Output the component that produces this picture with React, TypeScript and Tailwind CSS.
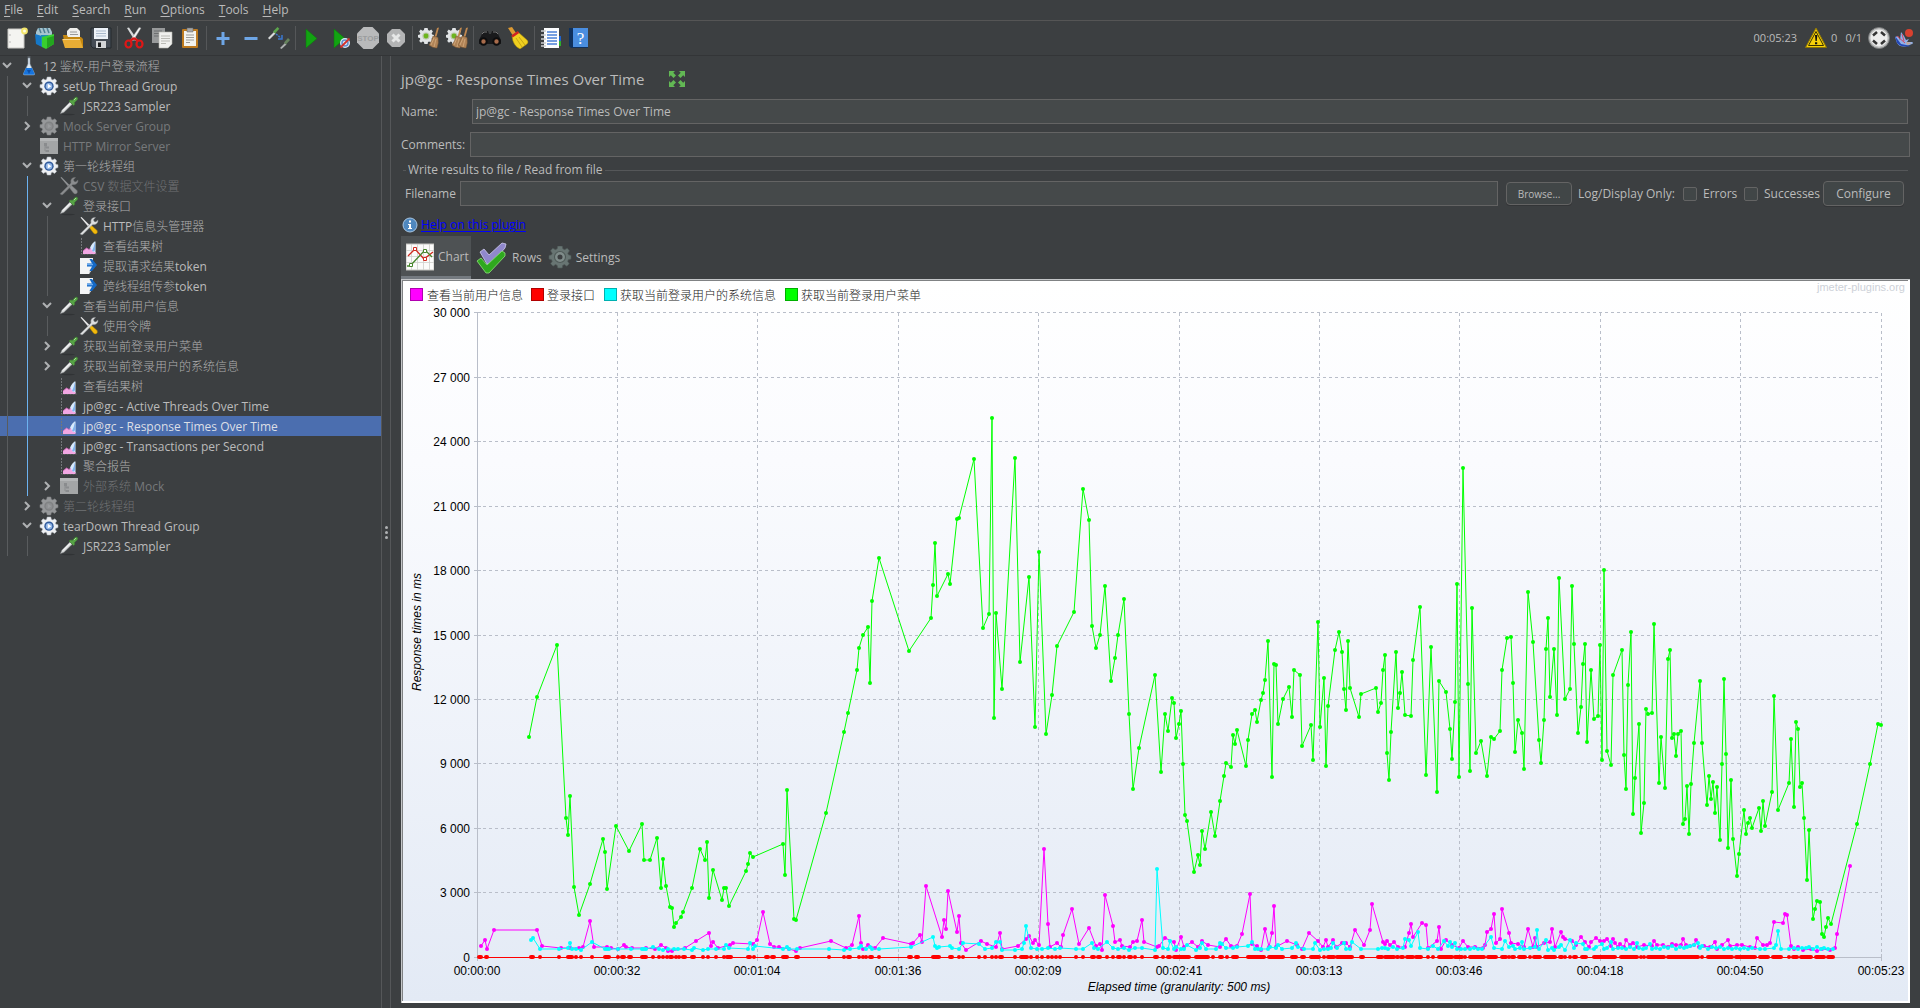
import type { ReactNode } from "react"

type TreeRow = {
  level: number
  icon: "flask" | "gear" | "dropper" | "page" | "tools" | "graph" | "script"
  label: string
  open?: boolean
  closed?: boolean
  off?: boolean
  selected?: boolean
  accent?: boolean
}

const tree: TreeRow[] = [
  { level: 0, icon: "flask", label: "12 鉴权-用户登录流程", open: true },
  { level: 1, icon: "gear", label: "setUp Thread Group", open: true },
  { level: 2, icon: "dropper", label: "JSR223 Sampler" },
  { level: 1, icon: "gear", label: "Mock Server Group", closed: true, off: true },
  { level: 1, icon: "page", label: "HTTP Mirror Server", off: true },
  { level: 1, icon: "gear", label: "第一轮线程组", open: true },
  { level: 2, icon: "tools", label: "CSV 数据文件设置", off: true, accent: true },
  { level: 2, icon: "dropper", label: "登录接口", open: true, accent: true },
  { level: 3, icon: "tools", label: "HTTP信息头管理器", accent: true },
  { level: 3, icon: "graph", label: "查看结果树", accent: true },
  { level: 3, icon: "script", label: "提取请求结果token", accent: true },
  { level: 3, icon: "script", label: "跨线程组传参token", accent: true },
  { level: 2, icon: "dropper", label: "查看当前用户信息", open: true, accent: true },
  { level: 3, icon: "tools", label: "使用令牌", accent: true },
  { level: 2, icon: "dropper", label: "获取当前登录用户菜单", closed: true, accent: true },
  { level: 2, icon: "dropper", label: "获取当前登录用户的系统信息", closed: true, accent: true },
  { level: 2, icon: "graph", label: "查看结果树", accent: true },
  { level: 2, icon: "graph", label: "jp@gc - Active Threads Over Time", accent: true },
  { level: 2, icon: "graph", label: "jp@gc - Response Times Over Time", selected: true, accent: true },
  { level: 2, icon: "graph", label: "jp@gc - Transactions per Second", accent: true },
  { level: 2, icon: "graph", label: "聚合报告", accent: true },
  { level: 2, icon: "page", label: "外部系统 Mock", closed: true, off: true, accent: true },
  { level: 1, icon: "gear", label: "第二轮线程组", closed: true, off: true },
  { level: 1, icon: "gear", label: "tearDown Thread Group", open: true },
  { level: 2, icon: "dropper", label: "JSR223 Sampler" },
]

// x,y pairs in chart units
const green =
  "529,737 537,697 557,645 566,818 568,835 570,796 574,887 579,915 590,884 603,839 605,852 607,889 616,826 629,851 642,824 644,860 650,860 657,838 661,888 663,859 666,886 670,907 672,908 674,927 676,923 681,917 683,912 692,888 700,849 705,860 707,842 709,898 713,870 722,900 724,888 726,888 729,906 746,871 748,864 750,853 753,857 783,844 785,875 787,790 794,919 796,920 826,813 844,732 848,713 857,670 859,648 863,635 868,627 870,683 872,601 879,558 909,651 931,618 933,585 935,543 937,596 948,574 950,584 957,519 959,518 974,459 983,628 989,614 992,418 994,718 996,613 1002,689 1015,458 1020,662 1029,577 1035,727 1039,552 1046,734 1052,695 1057,646 1074,612 1083,489 1089,520 1092,626 1096,648 1100,635 1105,586 1111,681 1115,658 1118,635 1124,599 1129,714 1133,789 1139,748 1155,675 1161,772 1165,714 1168,731 1172,698 1174,703 1176,738 1179,724 1181,711 1183,764 1185,815 1187,821 1194,872 1198,855 1200,865 1202,831 1205,849 1211,812 1215,836 1220,801 1224,776 1226,763 1231,767 1233,735 1235,744 1237,730 1246,766 1248,740 1252,714 1255,710 1257,722 1261,700 1263,693 1265,680 1268,641 1272,777 1274,664 1276,665 1278,724 1283,699 1289,687 1292,717 1294,670 1300,675 1302,746 1311,725 1313,760 1318,622 1320,727 1324,678 1326,766 1328,706 1335,650 1339,632 1342,652 1344,689 1346,710 1348,641 1350,688 1359,717 1361,694 1376,688 1378,712 1381,703 1383,670 1385,655 1387,753 1389,780 1391,732 1396,652 1398,708 1400,693 1402,672 1405,715 1411,716 1413,660 1420,607 1426,775 1431,647 1437,792 1439,681 1446,692 1450,729 1452,759 1455,702 1457,584 1459,777 1463,468 1468,684 1470,771 1472,608 1476,753 1481,741 1487,776 1491,737 1494,739 1500,731 1502,670 1507,638 1511,637 1513,683 1515,752 1518,720 1522,733 1524,769 1528,592 1533,642 1539,740 1541,763 1544,720 1546,649 1548,618 1550,697 1554,649 1557,715 1559,578 1565,699 1570,689 1572,586 1574,644 1578,733 1581,707 1583,664 1585,644 1587,742 1591,670 1594,719 1598,716 1600,645 1602,760 1604,570 1607,751 1611,765 1613,675 1622,650 1624,755 1626,789 1628,685 1631,632 1633,814 1635,778 1639,724 1641,833 1644,803 1646,709 1648,714 1652,713 1654,624 1659,783 1661,737 1665,788 1668,659 1670,650 1672,738 1674,734 1676,756 1678,734 1681,731 1683,824 1685,819 1687,786 1689,834 1691,784 1694,743 1700,681 1702,743 1707,805 1709,776 1711,799 1713,782 1715,813 1717,787 1720,840 1722,764 1724,679 1726,754 1728,848 1731,780 1733,839 1737,876 1739,854 1744,810 1746,834 1748,823 1750,818 1752,828 1759,808 1761,831 1763,801 1765,826 1772,792 1774,696 1778,810 1789,783 1791,739 1794,807 1796,722 1798,729 1800,787 1802,783 1804,818 1807,880 1809,830 1813,919 1815,909 1817,901 1820,902 1822,934 1824,937 1826,927 1828,918 1831,924 1857,824 1870,764 1878,724 1881,725"

const magenta =
  "481,946 485,940 487,949 494,930 537,930 542,946 561,948 570,948 579,948 583,947 590,921 594,947 607,947 611,948 618,949 624,945 626,947 632,948 646,948 655,949 661,945 666,948 668,951 672,951 685,948 696,941 709,933 711,946 713,942 718,948 730,945 733,943 753,944 757,940 763,912 770,944 774,947 779,947 789,949 796,951 800,948 831,941 846,948 852,945 859,916 861,943 863,949 868,945 875,948 883,938 911,944 913,943 920,935 922,942 926,886 942,937 944,920 946,929 948,891 957,932 959,916 961,943 966,950 981,941 987,944 996,947 1000,933 1002,949 1018,946 1026,939 1029,936 1033,943 1035,940 1039,945 1044,849 1048,924 1050,947 1057,943 1061,947 1063,935 1072,909 1079,944 1089,928 1096,946 1100,944 1102,950 1105,895 1113,926 1115,942 1120,940 1122,946 1130,947 1133,942 1137,941 1142,920 1144,942 1157,947 1159,946 1165,938 1174,942 1176,950 1181,937 1184,947 1192,942 1198,947 1202,941 1208,945 1220,947 1226,939 1231,946 1237,946 1242,934 1250,894 1252,944 1257,946 1261,950 1265,929 1269,947 1272,933 1274,906 1276,947 1287,941 1297,945 1302,949 1309,933 1318,941 1323,947 1326,940 1328,947 1333,940 1336,947 1342,943 1346,943 1350,947 1355,930 1364,945 1370,930 1372,904 1383,942 1385,944 1387,941 1390,945 1394,942 1398,947 1405,947 1409,933 1411,924 1413,937 1422,923 1426,925 1428,948 1437,941 1439,927 1441,949 1446,940 1452,945 1459,948 1463,941 1468,947 1475,947 1483,948 1485,945 1487,932 1491,929 1494,914 1496,943 1500,939 1502,909 1509,933 1511,943 1518,944 1524,947 1528,929 1533,947 1535,938 1537,947 1544,943 1550,942 1552,929 1555,947 1561,932 1563,937 1565,939 1572,941 1576,945 1581,937 1585,942 1589,947 1591,942 1596,938 1600,941 1604,941 1607,939 1611,946 1613,939 1615,943 1618,947 1620,944 1624,947 1626,940 1630,945 1633,943 1637,947 1644,945 1652,946 1654,941 1657,945 1663,945 1668,947 1672,944 1676,945 1681,945 1683,939 1686,945 1690,946 1694,945 1696,940 1699,947 1704,946 1710,947 1715,942 1717,949 1722,945 1728,940 1730,946 1737,945 1742,945 1750,947 1755,948 1757,938 1763,945 1767,945 1770,943 1774,922 1783,923 1785,914 1787,915 1791,946 1794,949 1798,947 1803,950 1811,949 1817,951 1822,949 1830,950 1835,948 1837,934 1850,866"

const cyan =
  "531,940 533,938 540,949 559,949 568,948 570,943 572,949 576,949 581,950 592,942 605,949 607,949 609,949 618,949 631,949 642,949 644,949 646,949 653,947 659,949 663,950 668,949 674,949 678,949 684,949 692,950 694,948 703,950 708,949 716,949 724,949 726,945 729,948 748,949 750,943 753,949 755,946 783,949 787,947 789,949 797,949 829,949 844,950 850,949 859,948 861,946 866,949 870,947 872,949 879,949 911,947 933,937 935,946 937,948 939,947 950,946 952,948 959,949 963,943 979,944 985,949 992,948 996,942 1000,942 1002,950 1015,950 1022,949 1024,943 1026,926 1031,948 1037,949 1042,949 1048,948 1055,949 1060,948 1076,949 1083,949 1092,943 1094,948 1098,949 1107,942 1113,948 1118,949 1124,948 1129,950 1135,948 1142,948 1155,950 1157,869 1163,948 1168,949 1170,941 1174,949 1176,947 1181,949 1184,949 1187,945 1196,950 1200,948 1202,943 1206,949 1216,949 1220,943 1222,944 1226,948 1233,948 1237,947 1248,946 1252,942 1255,949 1258,949 1261,949 1268,949 1270,947 1276,948 1278,945 1282,949 1292,948 1296,943 1298,947 1304,949 1313,949 1315,943 1320,950 1324,949 1328,949 1331,948 1333,943 1337,948 1344,943 1346,949 1350,949 1352,942 1361,949 1378,949 1382,948 1385,948 1388,949 1393,947 1397,949 1403,948 1405,939 1409,940 1411,946 1418,932 1420,948 1428,949 1433,946 1438,949 1444,941 1448,946 1450,942 1452,947 1455,943 1457,949 1461,949 1465,949 1470,949 1474,948 1478,949 1482,949 1491,937 1494,948 1502,949 1505,941 1509,947 1513,946 1515,949 1520,948 1522,942 1524,949 1530,948 1535,947 1537,930 1539,949 1546,940 1548,950 1552,948 1554,950 1559,947 1561,945 1565,950 1570,940 1574,948 1576,943 1583,944 1585,949 1587,949 1594,949 1596,947 1602,944 1604,949 1607,948 1611,942 1613,949 1618,948 1622,948 1626,949 1630,947 1634,949 1637,943 1639,948 1643,949 1646,948 1650,944 1652,949 1656,948 1660,949 1664,947 1668,948 1672,946 1676,949 1680,947 1684,948 1687,947 1690,946 1694,945 1698,943 1700,948 1702,946 1708,949 1712,947 1716,948 1720,947 1724,949 1728,948 1732,949 1736,948 1740,949 1744,948 1748,949 1752,948 1760,949 1765,949 1774,948 1776,945 1778,931 1781,949 1789,949 1794,948 1798,949 1802,948 1806,948 1809,947 1813,949 1817,947 1821,949 1824,948 1828,949 1833,949"

const redRuns = [
  [479, 481], [486, 487], [531, 533], [540, 540], [559, 559], [568, 572], [576, 576], [581, 581], [592, 592], [605, 609], [618, 618],
  [622, 624], [629, 631], [642, 646], [653, 653], [659, 659], [663, 663], [667, 667], [670, 672], [676, 676], [679, 679], [683, 685],
  [692, 694], [703, 703], [708, 708], [716, 716], [724, 724], [727, 731], [748, 750], [754, 754], [766, 768], [772, 774], [783, 787],
  [796, 798], [829, 829], [844, 844], [848, 850], [859, 859], [863, 863], [866, 866], [870, 872], [879, 879], [909, 911], [916, 918],
  [933, 939], [950, 952], [959, 959], [963, 963], [979, 979], [985, 985], [992, 992], [996, 996], [1000, 1002], [1015, 1015],
  [1021, 1027], [1031, 1031], [1037, 1037], [1042, 1042], [1048, 1048], [1052, 1052], [1056, 1056], [1060, 1060], [1076, 1076],
  [1083, 1083], [1092, 1094], [1098, 1100], [1107, 1107], [1113, 1113], [1118, 1120], [1124, 1124], [1129, 1131], [1135, 1135],
  [1142, 1142], [1155, 1157], [1163, 1163], [1168, 1170], [1174, 1189], [1196, 1208], [1213, 1213], [1220, 1222], [1227, 1227],
  [1233, 1237], [1248, 1264], [1269, 1283], [1292, 1296], [1302, 1304], [1311, 1319], [1324, 1324], [1328, 1334], [1337, 1352],
  [1361, 1363], [1378, 1382], [1385, 1394], [1397, 1398], [1401, 1403], [1407, 1413], [1416, 1421], [1428, 1428], [1433, 1433],
  [1439, 1452], [1455, 1462], [1465, 1465], [1470, 1484], [1488, 1496], [1502, 1506], [1509, 1509], [1512, 1514], [1519, 1525],
  [1530, 1530], [1534, 1540], [1545, 1555], [1560, 1562], [1565, 1565], [1570, 1570], [1574, 1576], [1582, 1586], [1594, 1615],
  [1621, 1637], [1641, 1641], [1644, 1644], [1648, 1664], [1668, 1698], [1702, 1702], [1708, 1732], [1736, 1755], [1760, 1768],
  [1773, 1781], [1789, 1789], [1793, 1797], [1801, 1811], [1816, 1824], [1828, 1833],
]

const yTicks = ["30 000", "27 000", "24 000", "21 000", "18 000", "15 000", "12 000", "9 000", "6 000", "3 000", "0"]
const yLines = [312, 377, 441, 506, 570, 635, 699, 763, 828, 892, 957]
const xTicks = ["00:00:00", "00:00:32", "00:01:04", "00:01:36", "00:02:09", "00:02:41", "00:03:13", "00:03:46", "00:04:18", "00:04:50", "00:05:23"]
const xLines = [477, 617, 757, 898, 1038, 1179, 1319, 1459, 1600, 1740, 1881]

function Series({ points, color }: { points: string; color: string }) {
  return (
    <g>
      <polyline points={points} fill="none" stroke={color} strokeWidth="1" />
      {points.split(" ").map((p, i) => {
        const [x, y] = p.split(",")
        return <circle key={i} cx={x} cy={y} r="2" fill={color} />
      })}
    </g>
  )
}

function Chart() {
  return (
    <svg viewBox="403 281 1505 720" className="block w-full h-auto font-['Liberation_Sans',Arial,sans-serif] text-[12px]">
      <defs>
        <linearGradient id="chartBg" x1="0" y1="0" x2="0" y2="1">
          <stop offset="0" stopColor="#ffffff" />
          <stop offset="0.25" stopColor="#fafbfe" />
          <stop offset="1" stopColor="#e3eaf5" />
        </linearGradient>
      </defs>
      <rect x="403" y="281" width="1505" height="720" fill="url(#chartBg)" />
      <g stroke="#b9bec9" fill="none">
        {yLines.slice(0, 10).map((y) => (
          <path key={y} d={`M477 ${y}.5H1881`} strokeDasharray="3 3" />
        ))}
        {xLines.slice(1).map((x) => (
          <path key={x} d={`M${x}.5 313V957`} strokeDasharray="3 3" />
        ))}
        {yLines.map((y) => (
          <path key={y} d={`M474 ${y}.5h7`} />
        ))}
        {xLines.map((x) => (
          <path key={x} d={`M${x}.5 954v7`} />
        ))}
        <path d="M477.5 313V957M477 957.5H1882" />
      </g>
      {yTicks.map((t, i) => (
        <text key={t} x="470" y={yLines[i] + 5} textAnchor="end">{t}</text>
      ))}
      {xTicks.map((t, i) => (
        <text key={t} x={xLines[i]} y="975" textAnchor="middle">{t}</text>
      ))}
      <text x="1179" y="991" textAnchor="middle" fontStyle="italic">Elapsed time (granularity: 500 ms)</text>
      <text transform="translate(421 632) rotate(-90)" textAnchor="middle" fontStyle="italic">Response times in ms</text>
      <Series points={magenta} color="#ff00ff" />
      <path d="M479 957.5H1833" stroke="#ff0000" />
      {redRuns.map(([a, b]) => (
        <rect key={a} x={a - 2} y="955" width={b - a + 4} height="4" rx="2" fill="#ff0000" />
      ))}
      <Series points={cyan} color="#00ffff" />
      <Series points={green} color="#00ff00" />
      <g className="font-['Noto_Sans_CJK_SC',sans-serif] font-light" fill="#222">
        <rect x="410.5" y="288.5" width="12" height="12" fill="#ff00ff" stroke="#b000b0" />
        <text x="427" y="300">查看当前用户信息</text>
        <rect x="531.5" y="288.5" width="12" height="12" fill="#ff0000" stroke="#b00000" />
        <text x="547" y="300">登录接口</text>
        <rect x="604.5" y="288.5" width="12" height="12" fill="#00ffff" stroke="#00b0b0" />
        <text x="620" y="300">获取当前登录用户的系统信息</text>
        <rect x="785.5" y="288.5" width="12" height="12" fill="#00ff00" stroke="#00b000" />
        <text x="801" y="300">获取当前登录用户菜单</text>
      </g>
      <text x="1905" y="291" textAnchor="end" fontSize="11" fill="#cdd1d8">jmeter-plugins.org</text>
    </svg>
  )
}

function Svg({ size = 22, children }: { size?: number; children: ReactNode }) {
  return (
    <svg width={size} height={size} viewBox={`0 0 ${size} ${size}`} className="shrink-0" aria-hidden="true">
      {children}
    </svg>
  )
}

const gearPath =
  "M8 0h4l.6 2.6 1.6.7L16.600 2l2 2.400-1.500 2.200.6 1.400 2.300.6v3.200l-2.400.6-.6 1.500 1.400 2.200-2.200 2.200-2.200-1.400-1.500.7L12 20H8l-.6-2.400-1.500-.7-2.200 1.400-2.200-2.200 1.400-2.200-.6-1.500L0 11.800V8.600L2.300 8l.6-1.400L1.400 4.400l2-2.400 2.400 1.300 1.600-.7z"

function TreeIcon({ name, off }: { name: TreeRow["icon"]; off?: boolean }) {
  if (name === "flask")
    return (
      <Svg size={20}>
        <path d="M8.500 1h3M9 2h2v6l4.500 9.500q.5 1.500-1 1.500h-9q-1.500 0-1-1.500L9 8z" fill="#dfe9f2" stroke="#8a98a6" strokeWidth="0.6" />
        <path d="M7 12h6l2.500 5.500q.4 1.300-1 1.300h-9q-1.400 0-1-1.300z" fill="#1875dd" />
        <path d="M8 14l2 4 2-4z" fill="#0d4fa8" />
      </Svg>
    )
  if (name === "gear")
    return (
      <Svg size={20}>
        <g transform="translate(1 1) scale(.9)">
          <path d={gearPath} fill={off ? "#96989a" : "#eef0f3"} stroke={off ? "#7f8183" : "#b5bac2"} strokeWidth="0.6" />
          <circle cx="10" cy="10.200" r="5.200" fill={off ? "#808284" : "#305a9c"} />
          <circle cx="10" cy="10.200" r="3.600" fill={off ? "#8c8e90" : "#8fb4e6"} />
          <path d="M8.600 7.600l4 2.600-4 2.600z" fill={off ? "#9a9c9e" : "#fff"} />
        </g>
      </Svg>
    )
  if (name === "dropper")
    return (
      <Svg size={20}>
        <ellipse cx="9" cy="18.500" rx="7" ry="0.800" fill="#303335" />
        <path d="M1.500 17.500L3 14l8-8 2.200 2.200-8.200 8z" fill="#d9dcdc" stroke="#8d9193" strokeWidth="0.500" />
        <path d="M4 14.500l7-7" stroke="#fff" strokeWidth="1" />
        <path d="M10 5l1.500-1 2 .2L16 1.500q1.500-1 2.500.200.8 1-.300 2.200L15.500 6.500l.2 2-1.200 1z" fill="#56a345" stroke="#3a7a2e" strokeWidth="0.500" />
        <path d="M15 4l2-2" stroke="#a6db92" />
      </Svg>
    )
  if (name === "page")
    return (
      <Svg size={20}>
        <rect x="1" y="2" width="18" height="16" fill="#a3a5a6" />
        <path d="M1 2h18v3H1z" fill="#b4b6b7" />
        <path d="M6 8v7h2M6 11h2" stroke="#8a8c8e" fill="none" />
        <path d="M5 7h3v3H5zM7 10.500h3v2H7zM7 14h3v2H7z" fill="#8a8c8e" />
      </Svg>
    )
  if (name === "tools")
    return (
      <Svg size={20}>
        <path d="M1.500 1.500l1-.5 9 9-1.500 1.500z" fill={off ? "#8f9193" : "#e8e8e8"} />
        <path d="M10 11l2-2 6 5.500q1 2-.5 3t-3-.5z" fill={off ? "#8f9193" : "#f2b90c"} stroke={off ? "#777" : "#b98a00"} strokeWidth="0.500" />
        <path d="M2 17L12 7q-.8-3.500 1.500-5 1.500-.9 3-.5l-2 2.300.6 1.600 1.700.5 2-2q.6 2-1 3.700-1.500 1.500-4 .9l-10 10q-1.500.5-2.300-.3T2 17z" fill={off ? "#8a8c8e" : "#dcdedf"} stroke={off ? "#6f7173" : "#8b8e90"} strokeWidth="0.500" />
      </Svg>
    )
  if (name === "graph")
    return (
      <Svg size={20}>
        <path d="M2.500 2v16h15" stroke="#74777a" fill="none" strokeDasharray="2 1" />
        <path d="M10 16q1-7 5.500-10.500h1V17H10z" fill="#d8e9fc" />
        <path d="M16 6v8q-1 2.500-3 1 2-4 3-9z" fill="#7fb2f0" />
        <path d="M4 18v-3l3.500-3 2.500 1.500 2-.5 2 3h2.500v2z" fill="#f2a8e4" />
        <path d="M4 15l3.500-3 2.500 1.500 2-1" stroke="#d565bb" fill="none" strokeWidth="0.800" />
      </Svg>
    )
  return (
    <Svg size={20}>
      <path d="M1 2h13v10l-4 6H1z" fill="#f4f5f6" />
      <path d="M10 18l1-5 3-1z" fill="#c5c8ca" />
      <path d="M8 7.500h5L10.500 3H13l5 6-5 6h-2.500L13 10.500H8z" fill="#1568c4" />
      <path d="M8 8.500h6" stroke="#69a9ee" strokeWidth="1.500" />
    </Svg>
  )
}

function Chevron({ open }: { open?: boolean }) {
  return (
    <svg width="14" height="14" viewBox="0 0 14 14" fill="none" stroke="#afb1b3" strokeWidth="2" aria-hidden="true">
      <path d={open ? "M3 4l4 4 4-4" : "M5 3l4 4-4 4"} />
    </svg>
  )
}

function Row({ row }: { row: TreeRow }) {
  const color = row.selected ? "text-[#dcdfe6]" : row.off ? "text-[#77797b]" : "text-[#bbbbbb]"
  return (
    <li className={`flex h-5 items-center ${row.selected ? "bg-[#4b6eaf]" : ""}`}>
      {Array.from({ length: row.level }, (_, i) => (
        <span key={i} className="h-5 w-5 shrink-0 pl-[7px]">
          <span className={`block h-full w-px ${i === 1 && row.accent ? "bg-[#6cb2f0]" : "bg-[#595c5e]"}`} />
        </span>
      ))}
      <span className="mr-[5px] w-[14px] shrink-0">{(row.open || row.closed) && <Chevron open={row.open} />}</span>
      <TreeIcon name={row.icon} off={row.off} />
      <span className={`ml-1 whitespace-pre pt-[2px] ${color}`}>
        {row.label.split(/([^\x00-\x7f]+)/).map((part, i) => (
          <span key={i} className={i % 2 ? "font-light opacity-90" : ""}>{part}</span>
        ))}
      </span>
    </li>
  )
}

const brush = (x: number) => (
  <g transform={`translate(${x} 0)`}>
    <path d="M12 1l2-.5-2.500 9-2 .5z" fill="#c08850" />
    <path d="M8 9l5 1.500q1 5-1 10.500-4 .5-8-3 3-4 4-9z" fill="#b08357" stroke="#7d5833" strokeWidth="0.500" />
    <path d="M9 11l-3 7M11 12l-2 8" stroke="#e0bb8c" strokeWidth="0.600" />
  </g>
)

const play = <path d="M5 2l11 9.500L5 21z" fill="#12a312" stroke="#0a7a0a" strokeWidth="0.500" />

const clearGear = (
  <g transform="translate(0 1) scale(.8)">
    <path d={gearPath} fill="#e1e4e6" />
    <circle cx="10" cy="10" r="4.500" fill="#b9c7a6" />
    <circle cx="10" cy="10" r="3" fill="#6cb51e" />
  </g>
)

const sheets = (
  <>
    <path d="M1 1h13v15H1z" fill="#989a9b" />
    <path d="M3 4h8M3 6.500h8M3 9h8" stroke="#6d6f70" />
    <path d="M8 5h13v12l-4 4H8z" fill="#f0f0ee" stroke="#b5b5b0" strokeWidth="0.600" />
    <path d="M10 9h9M10 11.500h9M10 14h9M10 16.500h5" stroke="#b9b9b4" />
  </>
)

const toolbar: { label: string; icon: ReactNode }[][] = [
  [
    { label: "New", icon: <><path d="M2 2h16v19H2z" fill="#f4f4f1" stroke="#c9c9c5" /><path d="M4 7v2M4 14v2" stroke="#bbb" /><circle cx="18.500" cy="4" r="3.400" fill="#f3e56b" /><circle cx="18.500" cy="4" r="1.500" fill="#fffde0" /></> },
    { label: "Templates", icon: <><path d="M2 5l2-4h12l2 4v6H2z" fill="#a7c4cf" /><path d="M5 1l2 5M9 1l2 5M13 1l2 5" stroke="#4f7f94" strokeWidth="1.500" /><path d="M1 7l7 2v11l-6-3z" fill="#1578c8" /><path d="M7 8h8l-2 3v10l-6-2z" fill="#1d8fb8" /><path d="M8 10l12-3v10l-8 5-4-2z" fill="#39cf2f" /><path d="M13 11l7-2v8l-7 4z" fill="#23a51f" /></> },
    { label: "Open", icon: <><path d="M5 10V4l3-3h7l3 3v8z" fill="#efefec" /><path d="M8 5h7M8 7.500h8" stroke="#999" /><path d="M1 8h4l1 2h13l2 2v9H3z" fill="#c5870f" /><path d="M0 12h18l3 9H3z" fill="#e8ad35" /><path d="M1 12.500h17" stroke="#f8d68a" /></> },
    { label: "Save", icon: <><path d="M1 1h20v20H3l-2-2z" fill="#454c55" stroke="#252a2f" /><path d="M4 1h14v11H4z" fill="#edf2f8" /><path d="M6 4h10M6 6.500h10M6 9h10" stroke="#a9b9cc" /><path d="M6 14h10v7H6z" fill="#d4d6d8" /><path d="M8 15.500h3v4.500H8z" fill="#1b1d1f" /></> },
  ],
  [
    { label: "Cut", icon: <><path d="M4 1l2-.5L14.500 13 12 14z" fill="#d8dadb" /><path d="M18 1l-2-.5L7.500 13l2.500 1z" fill="#f2f3f3" stroke="#999" strokeWidth="0.400" /><path d="M11 11l-4 3M11 11l4 3" stroke="#d61616" strokeWidth="2.500" /><ellipse cx="5.500" cy="17" rx="3" ry="3.500" fill="none" stroke="#de1717" strokeWidth="2.200" /><ellipse cx="16.500" cy="17" rx="3" ry="3.500" fill="none" stroke="#de1717" strokeWidth="2.200" /></> },
    { label: "Copy", icon: sheets },
    { label: "Paste", icon: <><rect x="3" y="2" width="16" height="19" rx="1" fill="#bd7a1f" /><path d="M5 4h12v15H5z" fill="#f3f3ef" /><path d="M8 1h6v4H8z" fill="#a5a7a8" stroke="#666" strokeWidth="0.500" /><path d="M7 8h8M7 10.500h8M7 13h8M7 15.500h4" stroke="#9b9b97" /></> },
  ],
  [
    { label: "Expand all", icon: <path d="M11 5v13M4.500 11.500h13" stroke="#6ea6e6" strokeWidth="3" /> },
    { label: "Collapse all", icon: <path d="M4.500 11.500h13" stroke="#6ea6e6" strokeWidth="3" /> },
    { label: "Toggle", icon: <><path d="M0 11l6-6 1.500 1.500-6 6z" fill="#d8dbdb" /><path d="M5 4.500L9.500 0l1.800 1.800L7 6.500z" fill="#5ca64c" /><path d="M12 21l5-5 1.500 1.500-5 4.500z" fill="#aeb1b1" /><path d="M16 15.500l4-4.500 2 2-4 4.500z" fill="#66835e" /><path d="M8 7l5 4" stroke="#3a78cf" strokeWidth="1.500" strokeDasharray="2 1" /><path d="M14 8v4h-4" stroke="#3a78cf" strokeWidth="1.500" fill="none" /></> },
  ],
  [
    { label: "Start", icon: play },
    { label: "Start no pauses", icon: <>{play}<circle cx="16" cy="16" r="5" fill="#dfe9f7" /><circle cx="16" cy="16" r="3" fill="none" stroke="#5b8fd0" strokeWidth="1.500" /><path d="M11.500 20.500l9-9" stroke="#d3302a" strokeWidth="1.800" /></> },
    { label: "Stop", icon: <><path d="M6.500 0h9L22 6.500v9L15.500 22h-9L0 15.500v-9z" fill="#b9babb" /><text x="11" y="14" textAnchor="middle" fontSize="8" fontWeight="700" fill="#9b9d9e" className="font-['Liberation_Sans',sans-serif]">STOP</text></> },
    { label: "Shutdown", icon: <><path d="M7 2h8l5 5v8l-5 5H7l-5-5V7z" fill="#b3b4b5" /><path d="M7.500 7.500l7 7M14.500 7.500l-7 7" stroke="#e6e7e7" strokeWidth="3" /></> },
  ],
  [
    { label: "Clear", icon: <>{clearGear}{brush(7)}</> },
    { label: "Clear all", icon: <>{clearGear}{brush(2)}{brush(8)}</> },
  ],
  [
    { label: "Search", icon: <><path d="M3 7l2-3h4l1 3h2l1-3h4l2 3 3 6v4H0v-4z" fill="#191a1c" /><path d="M3 7l2-2h3M14 5h3l2 2" stroke="#777" fill="none" /><circle cx="4.500" cy="14.500" r="3.200" fill="#a86c4c" stroke="#0d0d0e" strokeWidth="2" /><circle cx="17.500" cy="14.500" r="3.200" fill="#a86c4c" stroke="#0d0d0e" strokeWidth="2" /></> },
    { label: "Reset search", icon: <><path d="M1 1l4-1 4 6-3.500 2z" fill="#dd9a32" /><path d="M5 9l6-4 9 8q2 2 0 4l-7 5Q6 19 5 9z" fill="#f0cf1f" stroke="#a98c0a" strokeWidth="0.500" /><path d="M5 9.500l6.500-4.500" stroke="#d12222" strokeWidth="2.500" /><path d="M9 11l6 9M12 10l6 8" stroke="#b99a10" strokeWidth="0.800" /></> },
  ],
  [
    { label: "Function helper", icon: <><path d="M4 1h15v20H4z" fill="#fcfdfe" /><path d="M7 5h10M7 8h10M7 11h10M7 14h10M7 17h10" stroke="#4a80d8" strokeWidth="1.300" /><path d="M1 4h5M1 8h5M1 12h5M1 16h5M1 19h5" stroke="#cdd0d2" strokeWidth="1.500" /><path d="M19 9h2v5h-2z" fill="#1e63cc" /><path d="M19 14h2v5h-2z" fill="#2cae2c" /></> },
    { label: "Help", icon: <><path d="M1 1h19v20H3l-2-2z" fill="#10315c" /><path d="M5 1h15v19H5z" fill="#4a8ee0" /><text x="12.500" y="17" textAnchor="middle" fontSize="17" fill="#fff" className="font-['Liberation_Serif',serif]">?</text></> },
  ],
]

function Toolbar() {
  return (
    <div className="flex h-[35px] items-center border-b border-[#333537] pl-[3px] pr-[6px]">
      {toolbar.map((group, g) => (
        <div key={g} className="flex items-center">
          {g > 0 && <span className="mx-[2px] h-6 w-px bg-[#555759]" />}
          {group.map((b) => (
            <button key={b.label} aria-label={b.label} className="flex h-7 w-7 items-center justify-center">
              <Svg>{b.icon}</Svg>
            </button>
          ))}
        </div>
      ))}
      <div className="ml-auto flex items-center">
        <span className="text-[11px]">00:05:23</span>
        <span className="ml-2">
          <Svg>
            <path d="M11 1l10.500 19.500H.5z" fill="#f5cf0a" stroke="#8d7503" strokeLinejoin="round" />
            <path d="M11 4.500L18.500 18.500h-15z" fill="none" stroke="#3b3200" />
            <path d="M10 8h2.300l-.5 6h-1.300zM10 15.300h2.200v2H10z" fill="#111" />
          </Svg>
        </span>
        <span className="ml-1 text-[11px]">0</span>
        <span className="ml-2 text-[11px]">0/1</span>
        <span className="ml-1.5">
          <Svg>
            <circle cx="11" cy="11" r="10.500" fill="#bfc0c0" stroke="#77797a" />
            <circle cx="11" cy="11" r="8.500" fill="#ececec" />
            <path d="M9 5l-4 3.500M13 5l4 3.500M9 17l-4-3.500M13 17l4-3.500" fill="none" stroke="#333" strokeWidth="2.500" />
          </Svg>
        </span>
        <span className="ml-1">
          <Svg size={20}>
            <path d="M1 9l3-1 2 4 1-8 3 4 2 4 3-1-2 3 5 0q2 1 0 2l-5 2q-7 2-10-3z" fill="#8fb0ea" />
            <path d="M1 8l6 8 10 2q-10 2-14-3z" fill="#2347b5" />
            <path d="M3 8l8 7M8 6l2 7" stroke="#d9445a" strokeWidth="1" />
            <path d="M12 14l6 1-5 2z" fill="#c7a591" />
            <circle cx="15" cy="5" r="4" fill="#d9412f" />
          </Svg>
        </span>
      </div>
    </div>
  )
}

const field = "h-[25px] min-w-0 flex-1 border border-[#646464] bg-[#45494a] px-[3px] outline-none"

export default function App() {
  return (
    <div className="flex min-h-screen flex-col bg-[#3c3f41] font-['Open_Sans','Noto_Sans_CJK_SC',sans-serif] text-[12px] leading-4 text-[#bbbbbb]">
      <nav className="flex h-[21px] items-center gap-[14px] border-b border-[#555555] pl-1">
        {["File", "Edit", "Search", "Run", "Options", "Tools", "Help"].map((m) => (
          <button key={m}>
            <span className="underline underline-offset-2">{m[0]}</span>
            {m.slice(1)}
          </button>
        ))}
      </nav>
      <Toolbar />
      <div className="flex flex-1">
        <aside className="w-[382px] shrink-0 border-r border-[#555759]">
          <ul>
            {tree.map((row, i) => (
              <Row key={i} row={row} />
            ))}
          </ul>
        </aside>
        <div className="flex w-[9px] shrink-0 flex-col items-center justify-center gap-[2px] border-r border-[#555759]">
          <span className="h-[3px] w-[3px] rounded-full bg-[#afb1b3]" />
          <span className="h-[3px] w-[3px] rounded-full bg-[#afb1b3]" />
          <span className="h-[3px] w-[3px] rounded-full bg-[#afb1b3]" />
        </div>
        <main className="min-w-0 flex-1 px-[10px] pt-[11px] pb-[5px]">
          <div className="flex h-6 items-center gap-6">
            <h1 className="text-[15px]">jp@gc - Response Times Over Time</h1>
            <button aria-label="Expand">
              <Svg size={18}>
                <g fill="#62b854">
                  <path d="M1 1h6L5.300 2.800 8 5.500 5.500 8 2.800 5.300 1 7z" />
                  <path d="M17 1h-6l1.700 1.800L10 5.500 12.500 8l2.700-2.700L17 7z" />
                  <path d="M1 17h6l-1.700-1.800L8 12.500 5.500 10l-2.700 2.700L1 11z" />
                  <path d="M17 17h-6l1.700-1.800L10 12.500l2.500-2.500 2.700 2.700L17 11z" />
                </g>
              </Svg>
            </button>
          </div>
          <div className="mt-2 mr-[2px] flex items-center">
            <label htmlFor="name" className="w-[71px]">Name:</label>
            <input id="name" className={field} defaultValue="jp@gc - Response Times Over Time" />
          </div>
          <div className="mt-2 flex items-center">
            <label htmlFor="comments" className="w-[69px]">Comments:</label>
            <input id="comments" className={field} />
          </div>
          <fieldset className="mx-[2px] mt-[5px] min-w-0 border-t border-[#555759]">
            <legend className="ml-[3px] px-[2px]">Write results to file / Read from file</legend>
            <div className="mt-[3px] mr-1 flex items-center pl-[2px]">
              <label htmlFor="filename" className="w-[55px]">Filename</label>
              <input id="filename" className={field} />
              <button className="ml-2 h-[23px] w-[66px] rounded-sm border border-[#646464] bg-[#414647] text-[10px] shadow-[0_1px_0_#333537]">Browse...</button>
              <span className="ml-[6px] w-[105px] whitespace-nowrap">Log/Display Only:</span>
              <label className="flex w-[61px] items-center gap-[6px]">
                <input type="checkbox" className="h-[14px] w-[14px] appearance-none rounded-xs border border-[#646464] bg-[#414647]" />
                Errors
              </label>
              <label className="flex w-[79px] items-center gap-[6px]">
                <input type="checkbox" className="h-[14px] w-[14px] appearance-none rounded-xs border border-[#646464] bg-[#414647]" />
                Successes
              </label>
              <button className="h-[25px] w-[81px] rounded-sm border border-[#646464] bg-[#414647] shadow-[0_1px_0_#333537]">Configure</button>
            </div>
          </fieldset>
          <div className="mt-[10px] flex h-[18px] items-center gap-[3px] pl-[1px]">
            <Svg size={16}>
              <circle cx="8" cy="8" r="7" fill="#4f88bf" stroke="#a9c6e2" />
              <path d="M7 3.500h2v2H7zM6 7h3v4h1v1H6v-1h1V8H6z" fill="#fff" />
            </Svg>
            <a href="#help" className="text-[#0000ff] underline underline-offset-2">Help on this plugin</a>
          </div>
          <div role="tablist" className="mt-[2px] flex h-[43px]">
            <button role="tab" aria-selected="true" className="flex w-[70px] items-center gap-1 border-b-[3px] border-[#747a80] bg-[#4e5254] pl-[5px] pt-[2px]">
              <Svg size={28}>
                <path d="M0 1h28v26H0z" fill="#fbfbfa" stroke="#c4c4c0" />
                <path d="M5.500 1v26M11.500 1v26M17.500 1v26M23.500 1v26M0 7.500h28M0 13.500h28M0 19.500h28" stroke="#cfcfcb" strokeWidth="0.800" />
                <path d="M2 13l7-7 9 10 9-7" fill="none" stroke="#cf2b20" strokeWidth="1.300" />
                <path d="M1 23h3l15-16 7 7" fill="none" stroke="#47862c" strokeWidth="1.300" />
                <g fill="#fff"><path d="M7.500 4.500h3v3h-3zM17.500 14.500h3v3h-3z" stroke="#cf2b20" /><path d="M3.500 20.500h3v3h-3zM17.500 6.500h3v3h-3z" stroke="#47862c" /></g>
              </Svg>
              Chart
            </button>
            <button role="tab" aria-selected="false" className="flex items-center gap-1 pl-[5px]">
              <Svg size={32}>
                <path d="M4 10l4-3 5 6L26 1l4 1-1 4-14 16h-4z" fill="#9088cc" stroke="#cfcbf0" strokeWidth="0.800" />
                <path d="M1 19l4-3 6 7L26 9l3 2v3L13 31h-3z" fill="#2fa81e" stroke="#8fe07c" strokeWidth="0.800" />
              </Svg>
              Rows
            </button>
            <button role="tab" aria-selected="false" className="flex items-center gap-1 pl-[6px]">
              <Svg size={24}>
                <g transform="translate(1 0) scale(1.100)">
                  <path d={gearPath} fill="#687573" stroke="#4e5957" strokeWidth="0.600" />
                  <circle cx="10" cy="10" r="5" fill="#7f8c8a" stroke="#4e5957" />
                  <circle cx="10" cy="10" r="2.300" fill="#3c3f41" />
                </g>
              </Svg>
              Settings
            </button>
          </div>
          <section className="border-t border-l border-[#c4c6c8] bg-white pr-[2px] pb-[2px]">
            <div className="border-t border-l border-[#808284]">
              <Chart />
            </div>
          </section>
        </main>
      </div>
    </div>
  )
}
